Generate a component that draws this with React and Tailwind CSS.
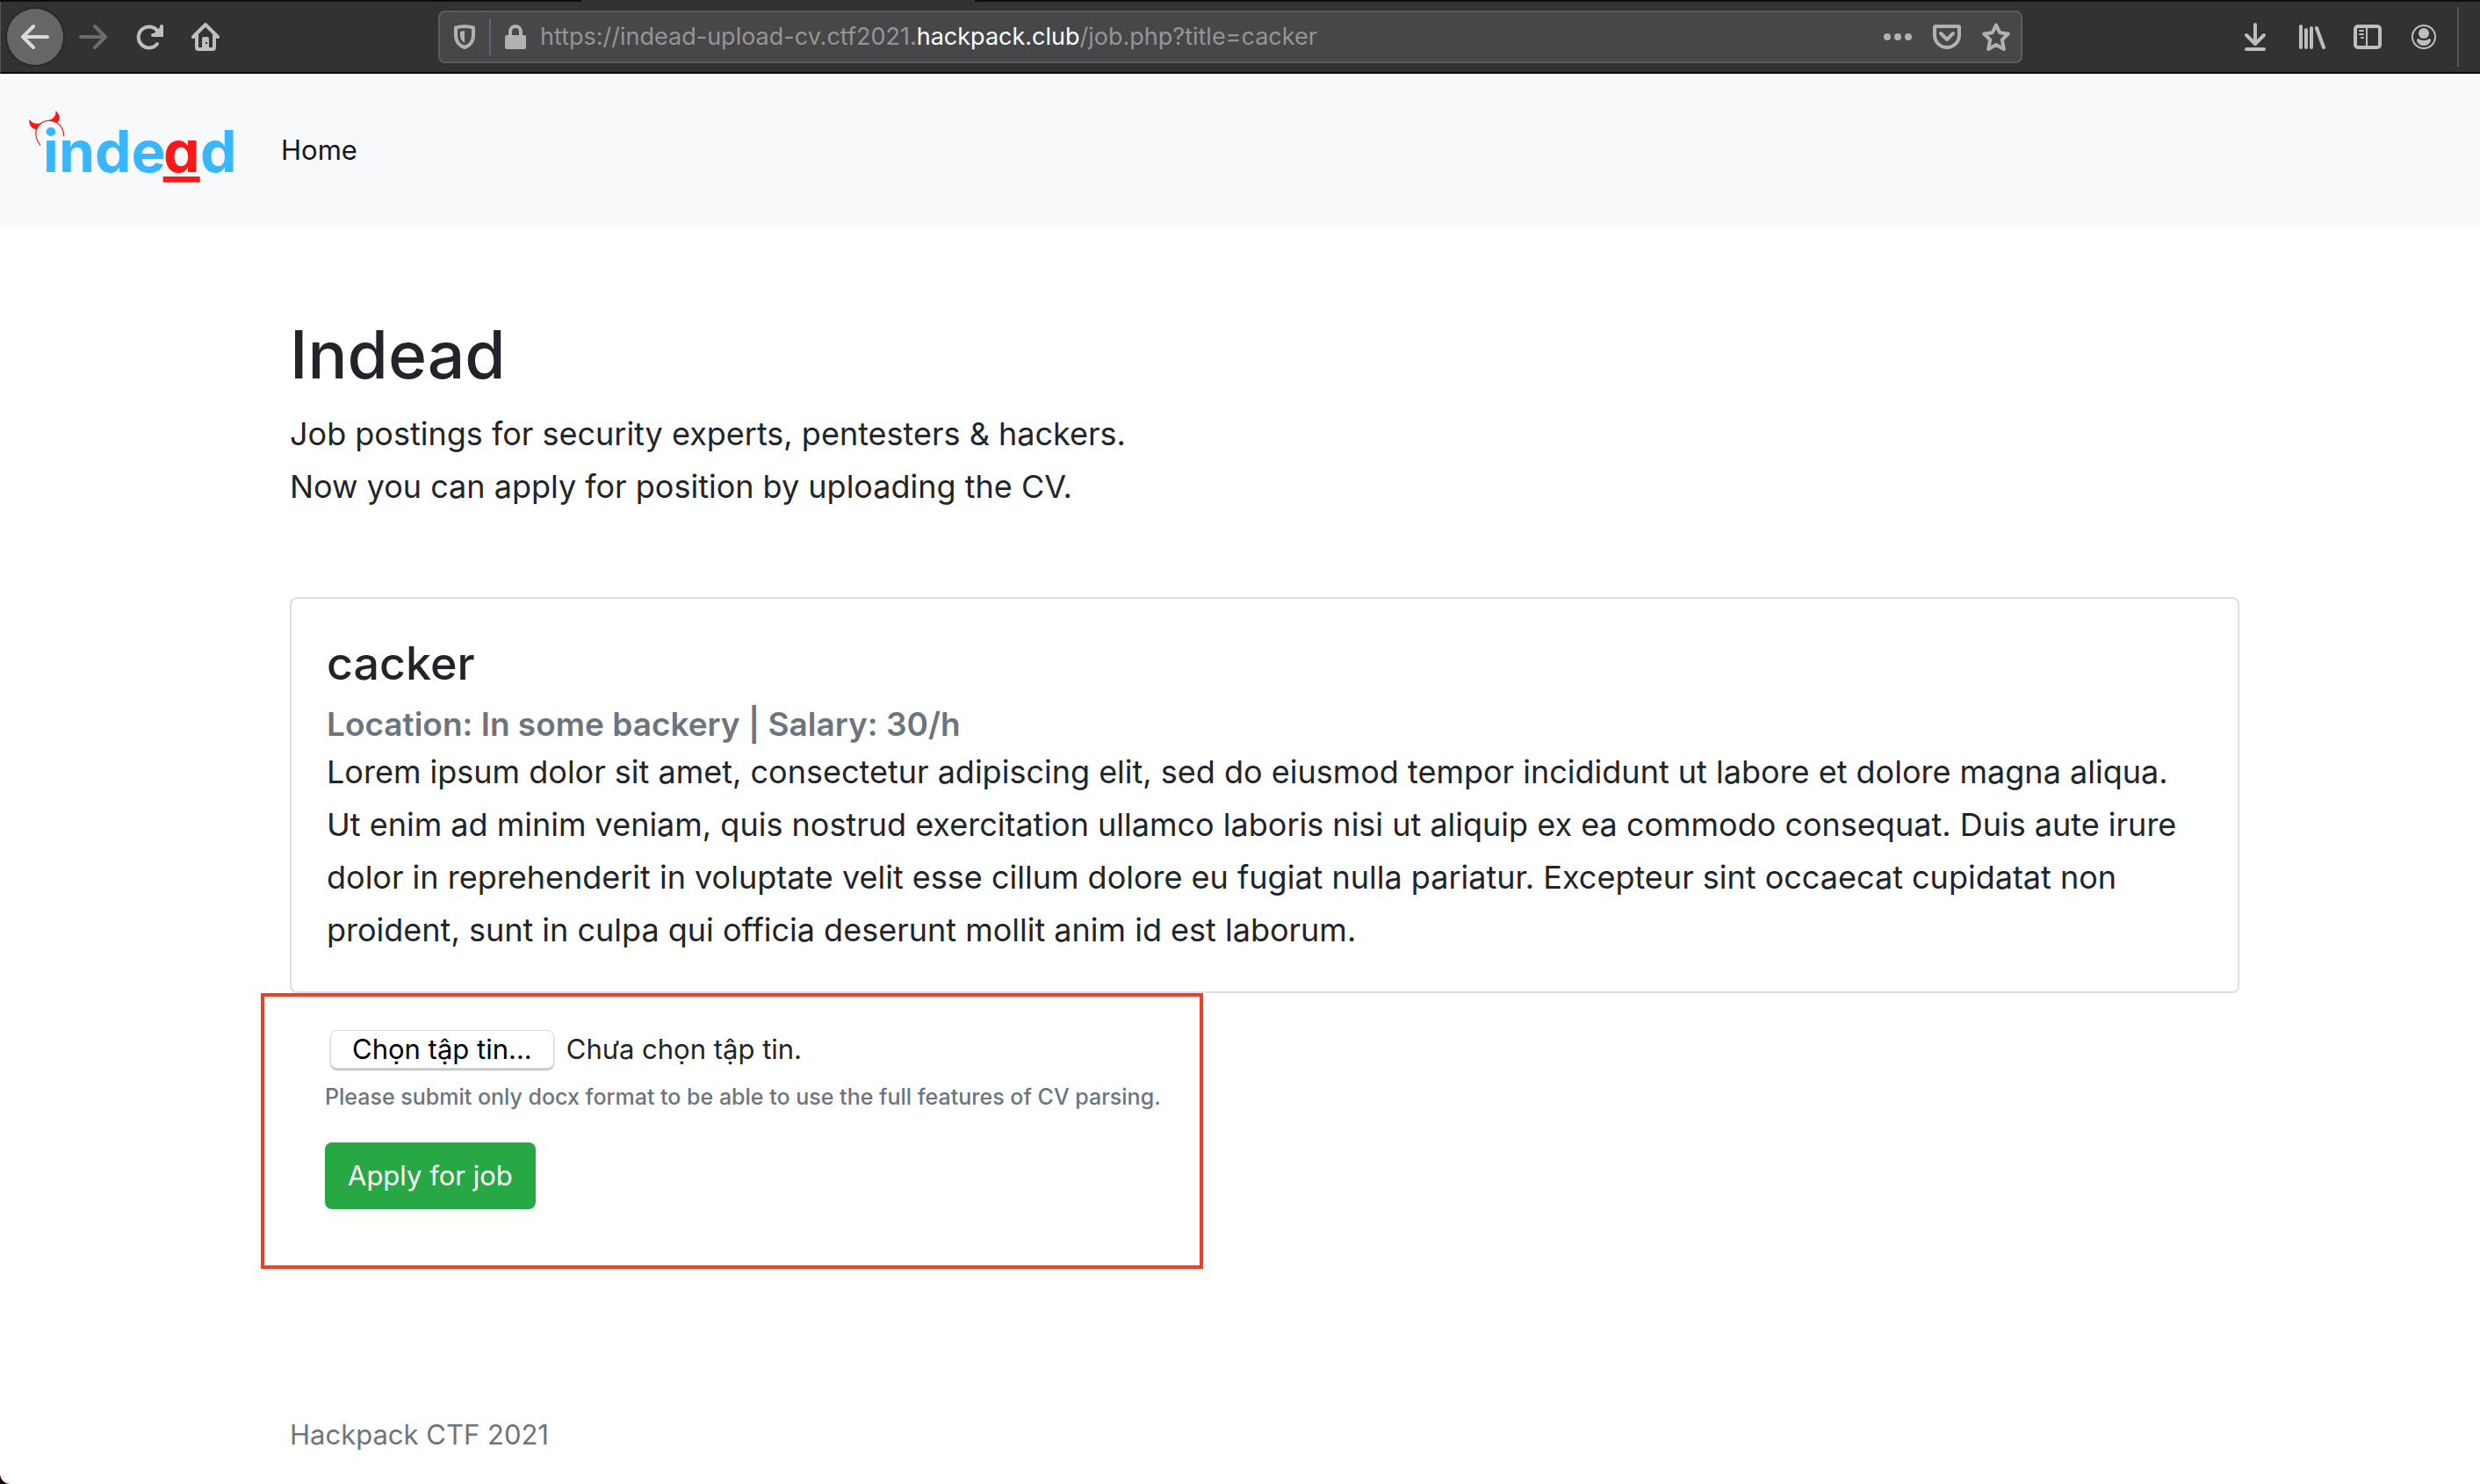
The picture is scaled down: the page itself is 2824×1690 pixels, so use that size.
import { useRef } from "react";

function Icon({ children, className = "text-[#bebebe]" }) {
  return (
    <svg
      viewBox="0 0 32 32"
      className={`size-8 shrink-0 ${className}`}
      fill="none"
      stroke="currentColor"
      strokeWidth="4"
      strokeLinecap="round"
      strokeLinejoin="round"
      aria-hidden="true"
    >
      {children}
    </svg>
  );
}

function ToolButton({ label, className = "", children }) {
  return (
    <button
      type="button"
      aria-label={label}
      className={`flex size-16 shrink-0 items-center justify-center rounded-full ${className}`}
    >
      {children}
    </button>
  );
}

function AddressBar() {
  return (
    <div className="flex h-15 flex-[1776] items-center rounded-lg border-2 border-[#5c5c5e] bg-[#474749] px-3">
      <button type="button" aria-label="Tracking protection">
        <Icon className="text-[#b1b1b3]">
          <path d="M16 4C12 4 9 4.600 6 5.500V14c0 8 5 12.500 10 14 5-1.500 10-6 10-14V5.500C23 4.600 20 4 16 4Z" />
          <path d="M16 9L11 10V14C11 18 13 21 16 23Z" fill="currentColor" stroke="none" />
        </Icon>
      </button>
      <span className="mx-3 h-[42px] w-0.5 bg-[#5e6372]" />
      <button type="button" aria-label="Site information">
        <Icon className="text-[#b1b1b3]">
          <path d="M10 15V10a6 6 0 0 1 12 0V15" strokeLinecap="butt" />
          <rect x="4" y="14" width="24" height="16" rx="2" fill="currentColor" stroke="none" />
        </Icon>
      </button>
      <div
        role="textbox"
        aria-label="Address"
        contentEditable
        suppressContentEditableWarning
        spellCheck={false}
        className="ml-3 flex-1 text-[27px] leading-9 whitespace-nowrap text-[#959595]"
      >
        https://indead-upload-cv.ctf2021.<span className="text-white">hackpack.club</span>/job.php?title=cacker
      </div>
      <div className="flex gap-6">
        <button type="button" aria-label="Page actions">
          <Icon className="text-[#b1b1b3]">
            <g fill="currentColor" stroke="none">
              <circle cx="4" cy="16" r="4" />
              <circle cx="16" cy="16" r="4" />
              <circle cx="28" cy="16" r="4" />
            </g>
          </Icon>
        </button>
        <button type="button" aria-label="Save to Pocket">
          <Icon className="text-[#b1b1b3]">
            <path d="M3 4H29a1 1 0 0 1 1 1V14a14 14 0 0 1-28 0V5a1 1 0 0 1 1-1Z" />
            <path d="M9 12L16 19L23 12" />
          </Icon>
        </button>
        <button type="button" aria-label="Bookmark this page">
          <Icon className="text-[#b1b1b3]">
            <path d="M16 2.500L20.300 11.300L29.700 12.500L22.800 19.200L24.800 30L16 25L7.200 30L9.200 19.200L2.300 12.500L11.700 11.300Z" />
          </Icon>
        </button>
      </div>
    </div>
  );
}

function BrowserToolbar() {
  return (
    <header className="bg-[#323234]">
      <div className="flex h-0.5">
        <span className="flex-[662] bg-[#0c0c0d]" />
        <span className="flex-[448]" />
        <span className="flex-[1714] bg-[#0c0c0d]" />
      </div>
      <div className="flex h-[82px] items-center border-b-2 border-l border-b-[#0c0c0d] border-l-[#555557] pr-6 pl-[7px]">
        <ToolButton label="Back" className="bg-[#666666] ring-2 ring-[#29292b]">
          <Icon className="text-[#d9d9d9]">
            <path d="M30 16H2M14 4L2 16L14 28" />
          </Icon>
        </ToolButton>
        <ToolButton label="Forward" className="ml-0.5">
          <Icon className="text-[#6c6c6d]">
            <path d="M2 16H30M18 4L30 16L18 28" />
          </Icon>
        </ToolButton>
        <ToolButton label="Reload">
          <Icon>
            <path d="M25 24A12 12 0 1 1 25.500 9.500" />
            <path d="M30 4V14H20" strokeLinejoin="miter" />
            <path d="M29 7V13H23Z" fill="currentColor" />
          </Icon>
        </ToolButton>
        <ToolButton label="Home page">
          <Icon>
            <path d="M2 16L16 2L30 16" />
            <path d="M6 14V28a2 2 0 0 0 2 2H24a2 2 0 0 0 2-2V14" />
            <path
              d="M12 30V18a2 2 0 0 1 2-2h4a2 2 0 0 1 2 2V30ZM16 22v2h2v-2Z"
              fill="currentColor"
              fillRule="evenodd"
              stroke="none"
            />
          </Icon>
        </ToolButton>
        <span className="flex-[233]" />
        <AddressBar />
        <span className="flex-[233]" />
        <ToolButton label="Downloads">
          <Icon>
            <path d="M16 2V23M6 14L16 24L26 14M6 30H26" />
          </Icon>
        </ToolButton>
        <ToolButton label="Library">
          <Icon>
            <path d="M4 4V28M10 8V28M16 6V28M22 6L30 28" />
          </Icon>
        </ToolButton>
        <ToolButton label="Sidebars">
          <Icon>
            <rect x="2" y="4" width="28" height="24" rx="3" />
            <path d="M15 4V28M7 9H11M7 13H11M9 17H11" strokeWidth="2" />
          </Icon>
        </ToolButton>
        <ToolButton label="Account">
          <Icon>
            <circle cx="16" cy="16" r="13" strokeWidth="2" />
            <g fill="currentColor" stroke="none">
              <circle cx="16" cy="12" r="6" />
              <path d="M10 18c-2 0-2.500 2-1.500 3.500C10 24.500 13 26 16 26s6-1.500 7.500-4.500c1-1.500.5-3.500-1.500-3.500-1.500 1.500-3.500 2-6 2s-4.500-.5-6-2Z" />
            </g>
          </Icon>
        </ToolButton>
        <span className="ml-1.5 h-17 w-0.5 bg-[#555557]" />
      </div>
    </header>
  );
}

function Logo() {
  return (
    <svg viewBox="0 0 260 110" className="h-[110px] w-[260px]" role="img" aria-label="indead">
      <g fill="#ff1616">
        <path d="M13.300 26C16 30 20 31.500 25.500 30.500L29 29.500C25.500 31.500 23 34.500 22 38C16.500 36.500 12.500 33 13.300 26Z" />
        <path d="M43.300 16C44 21 42 24 38 26L31 28.500C35.500 27.500 40 28 44.500 30C49 27 49 20.500 43.300 16Z" />
        <rect x="165.700" y="91" width="42" height="6.700" />
      </g>
      <path
        d="M26 55.500C19 47 18.500 35 28 29.500C39 23.500 53 31 52.500 45"
        fill="none"
        stroke="#ff1616"
        strokeWidth="1.200"
      />
      <text
        y="86"
        fontSize="66"
        fill="#38b6ff"
        className="font-['Inter'] font-bold [font-feature-settings:'cv11']"
      >
        <tspan x="29">inde</tspan>
        <tspan x="166" fill="#ff1616">a</tspan>
        <tspan x="208">d</tspan>
      </text>
    </svg>
  );
}

function SiteNav() {
  return (
    <nav className="flex items-center bg-[#f8f9fb] pt-[26px] pb-9 pl-5">
      <a href="#home">
        <Logo />
      </a>
      <a href="#home" className="ml-10 pt-3 text-[31px] leading-12 text-[#161719]">
        Home
      </a>
    </nav>
  );
}

function JobCard() {
  return (
    <article className="rounded-lg border-2 border-[#dfdfdf] px-10 py-10">
      <h2 className="mb-3 text-[52px] leading-[67px] font-medium">cacker</h2>
      <h3 className="text-[37px] leading-12 font-semibold text-[#6c757d]">
        Location: In some backery | Salary: 30/h
      </h3>
      <p className="text-[36px] leading-15">
        Lorem ipsum dolor sit amet, consectetur adipiscing elit, sed do eiusmod tempor incididunt ut
        labore et dolore magna aliqua. Ut enim ad minim veniam, quis nostrud exercitation ullamco
        laboris nisi ut aliquip ex ea commodo consequat. Duis aute irure dolor in reprehenderit in
        voluptate velit esse cillum dolore eu fugiat nulla pariatur. Excepteur sint occaecat
        cupidatat non proident, sunt in culpa qui officia deserunt mollit anim id est laborum.
      </p>
    </article>
  );
}

function ApplyForm() {
  const fileInput = useRef(null);
  return (
    <form
      onSubmit={(event) => event.preventDefault()}
      className="-ml-[33px] w-fit border-4 border-[#ee4028] pt-[38px] pr-11 pb-16 pl-[69px]"
    >
      <div className="ml-1.5 flex items-center gap-3.5 text-[31px] leading-11">
        <input ref={fileInput} id="cv" type="file" accept=".docx" aria-describedby="cv-help" className="sr-only" />
        <button
          type="button"
          onClick={() => fileInput.current?.click()}
          className="h-11 rounded-lg border border-[#dcdcdc] bg-white px-6 leading-10 text-black shadow-[0_2px_2px_#bdbdbd]"
        >
          Chọn tập tin...
        </button>
        <label htmlFor="cv">Chưa chọn tập tin.</label>
      </div>
      <small id="cv-help" className="mt-3 block text-[25px] leading-10 font-medium text-[#6c757d]">
        Please submit only docx format to be able to use the full features of CV parsing.
      </small>
      <button
        type="submit"
        className="mt-8 rounded-lg bg-[#28a745] px-[26px] py-3.5 text-[31px] leading-12 text-white"
      >
        Apply for job
      </button>
    </form>
  );
}

export default function App() {
  return (
    <div className="min-h-screen bg-[#1a0508] font-['Inter','Liberation_Sans',sans-serif] text-[#212529]">
      <div className="flex min-h-screen flex-col overflow-hidden rounded-bl-xl bg-white">
        <BrowserToolbar />
        <SiteNav />
        <main className="mr-[274px] ml-[330px] pt-25">
          <h1 className="mb-3 text-[75px] leading-24 font-medium">Indead</h1>
          <p className="text-[36px] leading-15">
            Job postings for security experts, pentesters &amp; hackers.
            <br />
            Now you can apply for position by uploading the CV.
          </p>
          <div className="mt-24">
            <JobCard />
            <ApplyForm />
          </div>
        </main>
        <footer className="mt-auto pb-8 pl-[330px] text-[31px] leading-12 text-[#6c757d]">
          Hackpack CTF 2021
        </footer>
      </div>
    </div>
  );
}
